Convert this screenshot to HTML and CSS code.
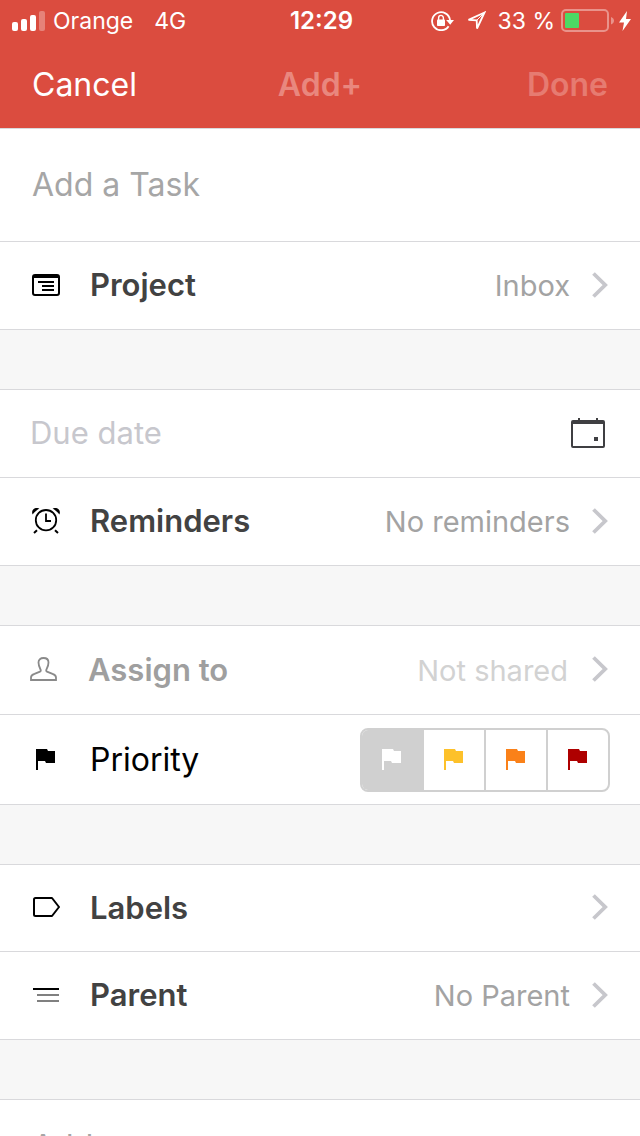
FILE: index.html
```html
<!DOCTYPE html>
<html lang="en">
<head>
    <meta charset="UTF-8">
    <meta name="viewport" content="width=device-width, initial-scale=1">
    <title>Add Task</title>
    <link rel="stylesheet" href="styles.css">
</head>
<body>

    <!-- Shared icon shapes -->
    <svg class="sprite" width="0" height="0" aria-hidden="true">
        <symbol id="chevron" viewBox="0 0 16 26">
            <path d="M1.5 1.5 13.2 13 1.5 24.5" fill="none" stroke="currentColor" stroke-width="3.8"/>
        </symbol>
        <symbol id="flag" viewBox="0 0 20 22">
            <path d="M0 0h11l1 2h7v12h-9l-1-2H2v9H0z" fill="currentColor"/>
        </symbol>
    </svg>

    <div class="screen">
        <header class="header">
            <div class="status-bar">
                <div class="status-left">
                    <svg width="33" height="20" viewBox="0 0 33 20" fill="#fff">
                        <rect x="0" y="11" width="6" height="9" rx="2"/>
                        <rect x="9" y="8" width="6" height="12" rx="2"/>
                        <rect x="18" y="4" width="6" height="16" rx="2"/>
                        <rect x="27" y="0" width="6" height="20" rx="2" opacity="0.3"/>
                    </svg>
                    <span class="carrier">Orange</span>
                    <span class="network">4G</span>
                </div>
                <div class="clock">12:29</div>
                <div class="status-right">
                    <svg width="23" height="20" viewBox="0 0 23 20">
                        <path d="M17.6 15.2A9 9 0 1 1 19 9" fill="none" stroke="#fff" stroke-width="1.8"/>
                        <path d="M15.2 9h7.8l-3.8 4.800z" fill="#fff"/>
                        <rect x="6" y="8.5" width="8" height="6.5" rx="0.8" fill="#fff"/>
                        <path d="M7.6 9V7a2.4 2.6 0 0 1 4.8 0v2" fill="none" stroke="#fff" stroke-width="1.4"/>
                    </svg>
                    <svg class="location" width="20" height="20" viewBox="0 0 20 20">
                        <path d="M18.500 1.500 2.500 8.900l8.200.4.300 8.200z" fill="none" stroke="#fff" stroke-width="1.800"/>
                        <path d="M10.700 9.300 18.500 1.500" stroke="#fff" stroke-width="1"/>
                    </svg>
                    <span class="percent">33 %</span>
                    <svg class="battery" width="54" height="23" viewBox="0 0 54 23">
                        <rect x="1" y="1" width="46" height="21" rx="4" fill="none" stroke="#fff" stroke-width="2" opacity="0.4"/>
                        <path d="M50 8c4 1.500 4 6 0 7.500z" fill="#fff" opacity="0.4"/>
                        <rect x="4" y="4" width="14" height="15" rx="1" fill="#4cd964"/>
                    </svg>
                    <svg width="12" height="20" viewBox="0 0 12 20">
                        <path d="M8 0 0 11.500h5L3.500 20 12 8H7z" fill="#fff"/>
                    </svg>
                </div>
            </div>
            <nav class="nav-bar">
                <button type="button" class="nav-button">Cancel</button>
                <button type="button" class="nav-button nav-title" disabled>Add+</button>
                <button type="button" class="nav-button nav-done" disabled>Done</button>
            </nav>
        </header>

        <main class="form">
            <section class="group">
                <div class="row row-task">
                    <input type="text" class="text-input" placeholder="Add a Task" aria-label="Task name">
                </div>
                <button type="button" class="row">
                    <span class="icon">
                        <svg width="28" height="22" viewBox="0 0 28 22">
                            <rect x="1" y="1" width="26" height="20" rx="2" fill="none" stroke="#000" stroke-width="2"/>
                            <path d="M1 1h26v3H1zM6 7h16v2H6zM10 11h12v2H10zM10 15h12v2H10z"/>
                        </svg>
                    </span>
                    <span class="label">Project</span>
                    <span class="value">Inbox</span>
                    <svg class="chevron" width="16" height="26"><use href="#chevron"/></svg>
                </button>
            </section>

            <section class="group">
                <div class="row row-date">
                    <input type="text" class="text-input date-input" placeholder="Due date" aria-label="Due date">
                    <button type="button" class="calendar-button" aria-label="Pick a date">
                        <svg width="34" height="30" viewBox="0 0 34 30" fill="#3f3f42">
                            <rect x="1" y="3" width="32" height="26" rx="1" fill="none" stroke="#3f3f42" stroke-width="2"/>
                            <path d="M1 3h32v3H1zM7 0h2v3H7zM25 0h2v3h-2zM23 19h4v4h-4z"/>
                        </svg>
                    </button>
                </div>
                <button type="button" class="row">
                    <span class="icon">
                        <svg width="28" height="26" viewBox="0 0 28 26">
                            <circle cx="14" cy="12.200" r="10.200" fill="none" stroke="#000" stroke-width="1.800"/>
                            <path d="M14 5.500v7.500h5" fill="none" stroke="#000" stroke-width="1.800"/>
                            <path d="M.6 6.600C-1.400 2 3-1.600 7.400.6 4.800 2 2.400 4.200.6 6.600zM27.400 6.600C29.400 2 25-1.600 20.600.6c2.600 1.400 5 3.600 6.800 6z"/>
                            <path d="M5 22.200 2 25M23 22.200 26 25" stroke="#000" stroke-width="2"/>
                        </svg>
                    </span>
                    <span class="label">Reminders</span>
                    <span class="value">No reminders</span>
                    <svg class="chevron" width="16" height="26"><use href="#chevron"/></svg>
                </button>
            </section>

            <section class="group">
                <button type="button" class="row row-disabled" disabled>
                    <span class="icon">
                        <svg width="28" height="24" viewBox="0 0 28 24">
                            <path d="M1 23v-2.500c0-2 1.500-3 3.500-3.700L10 14.700c1-.5 1-1.400.4-2.500C9 9.500 8.500 7.500 8.500 5.500 8.500 2.500 10.500 1 13.500 1s5 1.500 5 4.500c0 2-.5 4-1.900 6.700-.6 1.100-.6 2 .4 2.500l5.500 2.100c2 .7 3.500 1.700 3.500 3.700V23z" fill="none" stroke="#8a8a8a" stroke-width="1.800"/>
                        </svg>
                    </span>
                    <span class="label">Assign to</span>
                    <span class="value">Not shared</span>
                    <svg class="chevron" width="16" height="26"><use href="#chevron"/></svg>
                </button>
                <div class="row row-priority" role="radiogroup" aria-labelledby="priority-label">
                    <span class="icon">
                        <svg width="20" height="22"><use href="#flag"/></svg>
                    </span>
                    <span class="label label-plain" id="priority-label">Priority</span>
                    <div class="segments">
                        <label class="segment">
                            <input type="radio" name="priority" value="4" aria-label="Priority 4" checked>
                            <svg width="20" height="22"><use href="#flag"/></svg>
                        </label>
                        <label class="segment segment-yellow">
                            <input type="radio" name="priority" value="3" aria-label="Priority 3">
                            <svg width="20" height="22"><use href="#flag"/></svg>
                        </label>
                        <label class="segment segment-orange">
                            <input type="radio" name="priority" value="2" aria-label="Priority 2">
                            <svg width="20" height="22"><use href="#flag"/></svg>
                        </label>
                        <label class="segment segment-red">
                            <input type="radio" name="priority" value="1" aria-label="Priority 1">
                            <svg width="20" height="22"><use href="#flag"/></svg>
                        </label>
                    </div>
                </div>
            </section>

            <section class="group">
                <button type="button" class="row row-labels">
                    <span class="icon">
                        <svg width="28" height="20" viewBox="0 0 28 20">
                            <path d="M3.500 1H20l7 9-7 9H3.500Q2 19 2 17.500v-15Q2 1 3.500 1z" fill="none" stroke="#000" stroke-width="2" stroke-linejoin="round"/>
                        </svg>
                    </span>
                    <span class="label">Labels</span>
                    <svg class="chevron" width="16" height="26"><use href="#chevron"/></svg>
                </button>
                <button type="button" class="row">
                    <span class="icon">
                        <svg width="28" height="14" viewBox="0 0 28 14">
                            <path d="M1 0h26v2H1z"/>
                            <path d="M5 6h22v2H5zM5 12h22v2H5z" fill="#808080"/>
                        </svg>
                    </span>
                    <span class="label">Parent</span>
                    <span class="value">No Parent</span>
                    <svg class="chevron" width="16" height="26"><use href="#chevron"/></svg>
                </button>
            </section>

            <section class="group">
                <div class="row row-comment">
                    <input type="text" class="text-input" placeholder="Add" aria-label="Add">
                </div>
            </section>
        </main>
    </div>

</body>
</html>
```
FILE: styles.css
```css
* {
    box-sizing: border-box;
}

body {
    margin: 0;
    background-color: #f7f7f7;
    color: #000;
    font-family: Inter, "Liberation Sans", sans-serif;
    font-size: 32px;
}

button,
input {
    font: inherit;
    color: inherit;
    margin: 0;
    padding: 0;
    border: none;
    background: none;
}

svg {
    display: block;
    flex: none;
}

.sprite {
    position: absolute;
}

.screen {
    height: 100vh;
    overflow: hidden;
}

/* --- Header --- */
.header {
    background-color: #db4c3f;
    color: #fff;
}

.status-bar {
    display: grid;
    grid-template-columns: 1fr auto 1fr;
    align-items: center;
    height: 41px;
    padding: 0 9px 0 12px;
    font-size: 23px;
}

.status-left,
.status-right {
    display: flex;
    align-items: center;
}

.carrier {
    margin-left: 8px;
}

.network {
    margin-left: 21px;
}

.clock {
    font-size: 24px;
    font-weight: 600;
}

.status-right {
    justify-content: flex-end;
}

.location {
    margin: 0 12px;
}

.battery {
    margin: 0 4px 0 6px;
}

.nav-bar {
    display: grid;
    grid-template-columns: 1fr auto 1fr;
    align-items: center;
    height: 87px;
    padding: 0 32px;
}

.nav-button {
    justify-self: start;
}

.nav-title {
    font-weight: 600;
    color: #e9877e;
}

.nav-done {
    justify-self: end;
    font-weight: 600;
    color: #e67b71;
}

/* --- Rows --- */
.group {
    border-top: 1px solid #d9d9dc;
    margin-bottom: 59px;
}

.row {
    display: flex;
    align-items: center;
    width: 100%;
    height: 88px;
    padding: 0 32px 2px;
    background-color: #fff;
    border-bottom: 1px solid #d9d9dc;
    text-align: left;
}

.row-task {
    height: 113px;
}

.row-comment {
    height: 96px;
}

.row-date {
    padding-left: 30px;
}

.icon {
    display: flex;
    justify-content: center;
    width: 28px;
    margin-right: 30px;
}

.label {
    font-size: 31px;
    font-weight: 600;
    color: #424242;
}

.label-plain {
    font-size: 32px;
    font-weight: 400;
    color: #000;
}

.value {
    margin-left: auto;
    padding-top: 2px;
    font-size: 29px;
    color: #a3a3a3;
}

.chevron {
    margin-left: auto;
    color: #c7c7cc;
}

.value + .chevron {
    margin-left: 22px;
}

/* Disabled rows sit slightly further left */
.row-disabled {
    height: 89px;
    padding-left: 30px;
}

.row-disabled .label {
    color: #9f9f9f;
}

.row-disabled .value {
    color: #d2d2d2;
}

.row-disabled .value + .chevron {
    margin-left: 24px;
}

.row-labels {
    height: 87px;
}

.text-input {
    flex: 1;
    min-width: 0;
    outline: none;
}

.text-input::placeholder {
    color: #a6a6a6;
    opacity: 1;
}

.date-input {
    font-size: 31px;
}

.date-input::placeholder {
    color: #c7c7cd;
}

.calendar-button {
    padding: 0 3px;
}

/* --- Priority picker --- */
.row-priority {
    height: 90px;
    padding-right: 30px;
    padding-bottom: 0;
}

.segments {
    display: flex;
    margin-left: auto;
    border: 2px solid #d0d0d0;
    border-radius: 8px;
    overflow: hidden;
}

.segment {
    display: flex;
    align-items: center;
    justify-content: center;
    width: 60px;
    height: 60px;
    color: #fff;
    cursor: pointer;
}

.segment + .segment {
    width: 62px;
    border-left: 2px solid #d0d0d0;
}

.segment input {
    position: absolute;
    opacity: 0;
}

.segment:has(input:checked) {
    background-color: #d0d0d0;
}

.segment-yellow {
    color: #fdc12a;
}

.segment-orange {
    color: #fa8119;
}

.segment-red {
    color: #ae0000;
}
```
